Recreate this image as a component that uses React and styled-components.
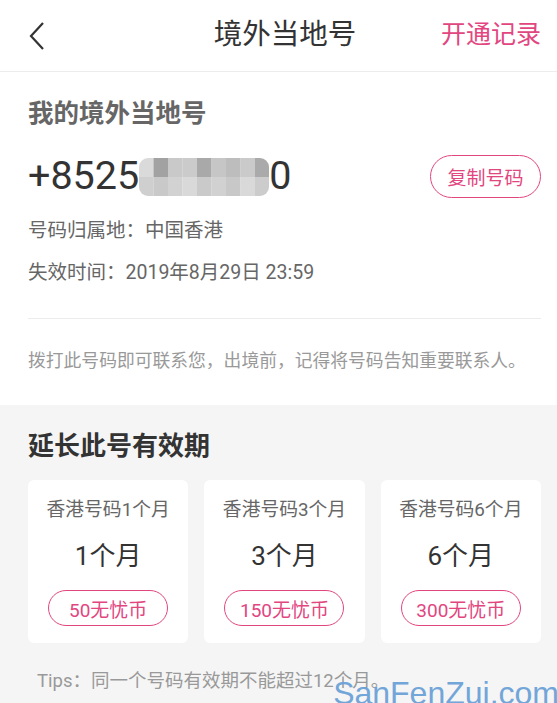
import React from 'react';
import styled, { createGlobalStyle } from 'styled-components';

const GlobalStyle = createGlobalStyle`
  html, body {
    margin: 0;
    padding: 0;
    background: #fff;
  }
  body {
    font-family: Roboto, "Noto Sans CJK SC", sans-serif;
    color: #333;
  }
  * { box-sizing: border-box; }
`;

const PINK = '#e2467f';

const Page = styled.div`
  position: relative;
  width: 557px;
  height: 703px;
  overflow: hidden;
  background: #f5f5f5;
`;

const Header = styled.div`
  height: 72px;
  display: grid;
  grid-template-columns: 135px 1fr 122px;
  align-items: center;
  background: #fff;
  border-bottom: 1px solid #ededed;
`;

const Back = styled.div`
  padding-left: 28px;
  display: flex;
  align-items: center;
`;

const Title = styled.div`
  text-align: center;
  font-size: 28.5px;
  color: #333;
  line-height: 36px;
  padding-bottom: 1px;
  white-space: nowrap;
`;

const HeaderLink = styled.a`
  text-align: right;
  padding-right: 16px;
  font-size: 25px;
  color: ${PINK};
  line-height: 34px;
  white-space: nowrap;
  padding-bottom: 1px;
`;

const NumberSection = styled.section`
  background: #fff;
  padding: 24px 16px 32px 28px;
`;

const SectionTitle = styled.h2`
  margin: 0;
  font-size: ${p => p.$size || 25.5}px;
  line-height: ${p => p.$lh || 34}px;
  font-weight: 700;
  color: ${p => p.$color || '#666'};
`;

const NumberRow = styled.div`
  margin-top: 22px;
  height: 48px;
  display: flex;
  align-items: center;
  justify-content: space-between;
`;

const PhoneNumber = styled.div`
  display: flex;
  align-items: center;
  font-size: 39.5px;
  line-height: 48px;
  color: #333;
`;

const OutlineButton = styled.button`
  width: ${p => p.$w}px;
  height: ${p => p.$h}px;
  border: ${p => p.$bw || 1}px solid ${PINK};
  border-radius: ${p => p.$h / 2}px;
  background: #fff;
  color: ${PINK};
  font-family: Roboto, "Noto Sans CJK SC", sans-serif;
  font-size: ${p => p.$fs}px;
  padding: 0;
  display: flex;
  align-items: center;
  justify-content: center;
  white-space: nowrap;
`;

const InfoLine = styled.div`
  margin-top: ${p => p.$mt}px;
  font-size: 19.5px;
  line-height: 26px;
  color: #666;
`;

const Divider = styled.div`
  margin-top: 32px;
  height: 1px;
  background: #ececec;
`;

const Note = styled.div`
  margin-top: 30px;
  font-size: 17.8px;
  line-height: 24px;
  color: #999;
  white-space: nowrap;
`;

const ExtendSection = styled.section`
  padding: 24px 16px 0 28px;
`;

const Cards = styled.div`
  margin-top: 17px;
  display: grid;
  grid-template-columns: repeat(3, 1fr);
  gap: 16px;
`;

const Card = styled.div`
  height: 163px;
  background: #fff;
  border-radius: 6px;
  padding-top: 18px;
  display: flex;
  flex-direction: column;
  align-items: center;
`;

const CardTitle = styled.div`
  font-size: 18.8px;
  line-height: 24px;
  color: #666;
  white-space: nowrap;
`;

const CardPeriod = styled.div`
  margin-top: 17px;
  margin-bottom: 17px;
  font-size: 26px;
  line-height: 34px;
  color: #333;
`;

const Tips = styled.div`
  margin-top: 26px;
  padding-left: 9px;
  font-size: 18.5px;
  line-height: 24px;
  color: #999;
  white-space: nowrap;
`;

const Watermark = styled.div`
  position: absolute;
  right: -2px;
  bottom: -8px;
  font-family: "Liberation Sans", Arial, sans-serif;
  font-size: 32px;
  line-height: 36px;
  color: #6ba2d8;
  opacity: 0.95;
`;

const mosaicTop = ['#dadada', '#a2a2a2', '#c9c9c9', '#cbcbcb', '#a9a9a9', '#c6c6c6', '#bdbdbd', '#cacaca', '#aaaaaa'];
const mosaicBottom = ['#cfcfcf', '#c9c9c9', '#d2d2d2', '#d9d9d9', '#cacaca', '#d1d1d1', '#c8c8c8', '#d9d9d9', '#cccccc'];

const Mosaic = () => (
  <svg width="130" height="38" viewBox="0 0 130 38" style={{ marginTop: 2 }}>
    <defs>
      <clipPath id="mosaicClip">
        <rect x="0" y="0" width="130" height="38" rx="9" />
      </clipPath>
    </defs>
    <g clipPath="url(#mosaicClip)">
      {mosaicTop.map((c, i) => (
        <rect key={'t' + i} x={i * 14.5} y="0" width="14.6" height="19" fill={c} />
      ))}
      {mosaicBottom.map((c, i) => (
        <rect key={'b' + i} x={i * 14.5} y="19" width="14.6" height="19" fill={c} />
      ))}
    </g>
  </svg>
);

const plans = [
  { name: '香港号码1个月', period: '1个月', price: '50无忧币' },
  { name: '香港号码3个月', period: '3个月', price: '150无忧币' },
  { name: '香港号码6个月', period: '6个月', price: '300无忧币' },
];

export default function App() {
  return (
    <Page>
      <GlobalStyle />
      <Header>
        <Back>
          <svg width="18" height="30" viewBox="0 0 18 30">
            <polyline points="15,2 3,15 15,28" fill="none" stroke="#333" strokeWidth="2.2" strokeLinejoin="miter" />
          </svg>
        </Back>
        <Title>境外当地号</Title>
        <HeaderLink>开通记录</HeaderLink>
      </Header>

      <NumberSection>
        <SectionTitle>我的境外当地号</SectionTitle>
        <NumberRow>
          <PhoneNumber>
            +8525
            <Mosaic />
            0
          </PhoneNumber>
          <OutlineButton $w={111} $h={43} $bw={1.5} $fs={19}>复制号码</OutlineButton>
        </NumberRow>
        <InfoLine $mt={18}>号码归属地：中国香港</InfoLine>
        <InfoLine $mt={16}>失效时间：2019年8月29日 23:59</InfoLine>
        <Divider />
        <Note>拨打此号码即可联系您，出境前，记得将号码告知重要联系人。</Note>
      </NumberSection>

      <ExtendSection>
        <SectionTitle $size={26} $lh={34} $color="#333">延长此号有效期</SectionTitle>
        <Cards>
          {plans.map(p => (
            <Card key={p.name}>
              <CardTitle>{p.name}</CardTitle>
              <CardPeriod>{p.period}</CardPeriod>
              <OutlineButton $w={120} $h={36} $fs={19}>{p.price}</OutlineButton>
            </Card>
          ))}
        </Cards>
        <Tips>Tips：同一个号码有效期不能超过12个月。</Tips>
      </ExtendSection>

      <Watermark>SanFenZui.com</Watermark>
    </Page>
  );
}
